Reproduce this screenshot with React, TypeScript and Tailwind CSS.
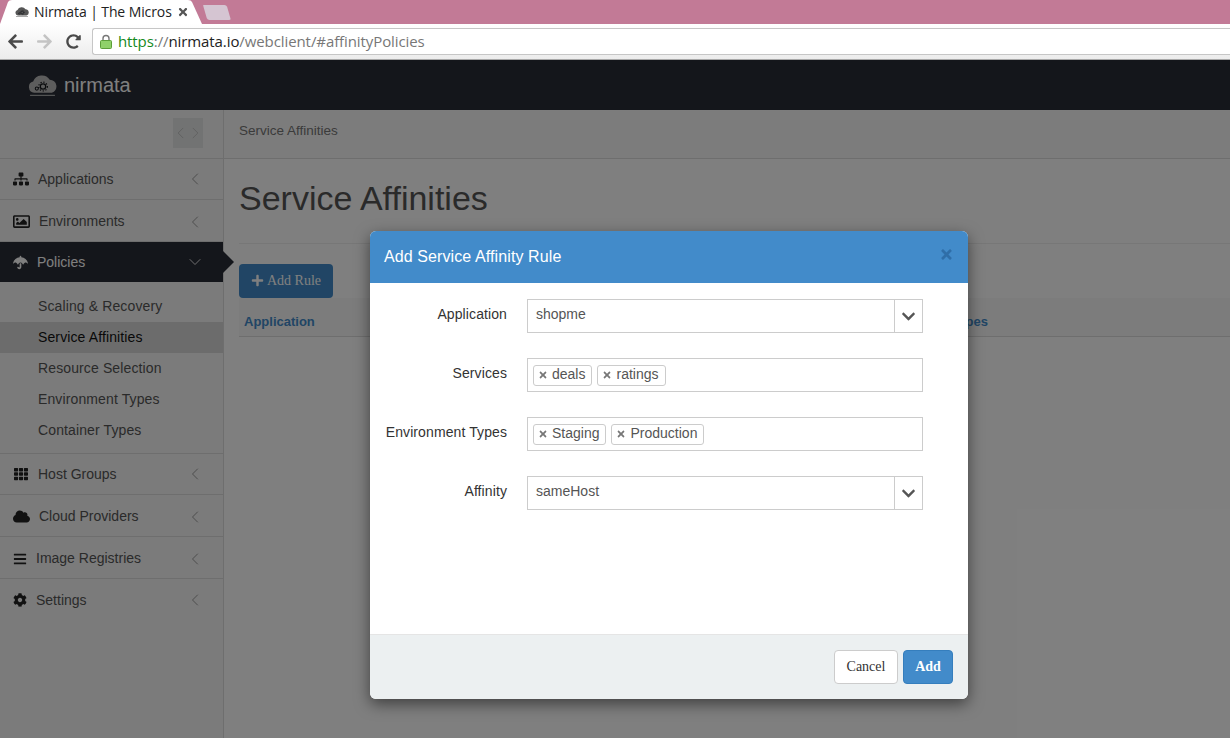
import { ChevronDown, ChevronLeft, ChevronRight } from 'lucide-react';
import {
  FaArrowLeft,
  FaArrowRight,
  FaBars,
  FaChevronDown,
  FaCloud,
  FaCog,
  FaPlus,
  FaRedoAlt,
  FaRegImage,
  FaSitemap,
  FaTh,
  FaTimes,
  FaUmbrella,
} from 'react-icons/fa';

const SUB_ITEMS = ['Scaling & Recovery', 'Service Affinities', 'Resource Selection', 'Environment Types', 'Container Types'];

function CloudLogo({ className }: { className: string }) {
  return (
    <svg viewBox="1 1 28 22" className={className}>
      <path d="M7 19a5.5 5.5 0 0 1-1-10.8A9 9 0 0 1 22 6.5a6.4 6.4 0 0 1 2 12.5z" fill="currentColor" />
      <circle cx="15.5" cy="13" r="2.6" fill="none" stroke="#14161b" strokeWidth="1.2" />
      <circle cx="15.5" cy="13" r="4.2" fill="none" stroke="#14161b" strokeWidth="1.2" strokeDasharray="1.2 1.6" />
      <circle cx="9.5" cy="15" r="1.5" fill="none" stroke="#14161b" strokeWidth="1" />
      <rect x="3" y="21" width="24" height="1" fill="currentColor" />
    </svg>
  );
}

function BrowserChrome() {
  return (
    <div className="h-[60px] shrink-0 flex flex-col font-['Open_Sans',sans-serif]">
      {/* Tab strip */}
      <div className="h-[24px] bg-[#c27a96] flex items-end overflow-hidden">
        <div className="relative h-[24px] w-[202px] shrink-0 flex items-center pl-[15px] text-[14px] text-[#222]">
          <svg viewBox="0 0 202 24" className="absolute inset-0 w-full h-full">
            <path d="M0 24 L8 2 Q9 0 12 0 H188 Q191 0 192 2 L202 24 Z" fill="#fff" />
          </svg>
          <CloudLogo className="relative w-[14px] h-[12px] text-[#555] mr-[5px] shrink-0" />
          <span className="relative w-[136px] shrink-0 whitespace-nowrap leading-none tracking-[-0.1px]">Nirmata | The Micros</span>
          <FaTimes className="relative ml-[7px] w-[12px] h-[12px] text-[#555]" />
        </div>
        <svg viewBox="0 0 32 17" className="w-[31px] h-[15px] mb-[4px] -ml-[1px]">
          <path d="M1 0 H25 Q27 0 28 2 L32 16 Q32 17 30 17 H8 Q6 17 5 15 L1 1 Z" fill="#d5c5d2" />
        </svg>
      </div>
      {/* Address bar */}
      <div className="h-[36px] bg-[linear-gradient(#fff,#ececec)] border-b border-[#a8a8a8] flex items-center">
        <div className="w-[92px] pl-[7px] flex items-center gap-[12px] shrink-0">
          <FaArrowLeft className="w-[17px] h-[17px] text-[#4a4a4a]" />
          <FaArrowRight className="w-[17px] h-[17px] text-[#c4c4c4]" />
          <FaRedoAlt className="ml-px w-[15px] h-[15px] text-[#4a4a4a]" />
        </div>
        <div className="flex-1 h-[27px] bg-white border border-[#c6c6c6] rounded-l-[3px] border-r-0 flex items-center pl-[7px] text-[15px] tracking-[-0.09px] whitespace-nowrap">
          <svg viewBox="0 0 12 15" className="w-[12px] h-[15px] mr-[6px] shrink-0">
            <path d="M3 7V4.5a3 3 0 0 1 6 0V7" fill="none" stroke="#777" strokeWidth="1.4" />
            <rect x="0.5" y="6.5" width="11" height="8" rx="1" fill="#8fd16a" stroke="#5c9e3a" />
          </svg>
          <span className="text-[#14891c]">https</span>
          <span className="text-[#777]">://</span>
          <span className="text-[#222]">nirmata.io</span>
          <span className="text-[#777]">/webclient/#affinityPolicies</span>
        </div>
      </div>
    </div>
  );
}

function NavRow({ icon, label, short, last }: { icon: React.ReactNode; label: string; short?: boolean; last?: boolean }) {
  const rowClass = last ? 'h-[42px]' : short ? 'h-[41px] border-b border-[#ddd]' : 'h-[42px] pt-[2px] border-b border-[#ddd]';
  return (
    <div className={`flex items-center pl-[13px] pr-[18px] text-[14px] text-[#555] ${rowClass}`}>
      <span className="flex items-center gap-[9px]">
        {icon}
        <span>{label}</span>
      </span>
      <ChevronLeft className="ml-auto w-[20px] h-[20px] text-[#888]" strokeWidth={1} />
    </div>
  );
}

function Sidebar() {
  return (
    <aside className="w-[224px] shrink-0 bg-[#f6f6f6] border-r border-[#ddd]">
      <div className="h-[49px] border-b border-[#ddd] flex justify-end pt-[8px] pr-[20px]">
        <div className="w-[30px] h-[30px] bg-[#e4e6e6] flex items-center justify-center text-[#bbb]">
          <ChevronLeft className="w-[20px] h-[20px] -mx-[2px]" strokeWidth={1} />
          <ChevronRight className="w-[20px] h-[20px] -mx-[2px]" strokeWidth={1} />
        </div>
      </div>
      <NavRow icon={<FaSitemap className="w-[16px] h-[14px] text-[#222]" />} label="Applications" short />
      <NavRow icon={<FaRegImage className="w-[17px] h-[17px] text-[#222]" />} label="Environments" />
      {/* Active group */}
      <div className="relative h-[40px] bg-[#292c36] flex items-center pl-[13px] pr-[18px] text-[14px] text-white">
        <span className="flex items-center gap-[9px]">
          <FaUmbrella className="w-[15px] h-[15px] text-white" />
          <span>Policies</span>
        </span>
        <ChevronDown className="ml-auto w-[20px] h-[20px] text-white" strokeWidth={1} />
        <span className="absolute left-full top-[9px] border-y-[11px] border-l-[11px] border-y-transparent border-l-[#292c36]" />
      </div>
      <div className="h-[172px] border-b border-[#ddd] pt-[9px] text-[14px] tracking-[0.12px]">
        {SUB_ITEMS.map((item) => (
          <div
            key={item}
            className={`h-[31px] pl-[38px] flex items-center ${item === 'Service Affinities' ? 'bg-[#d9d9d9] text-[#111]' : 'text-[#555]'}`}
          >
            {item}
          </div>
        ))}
      </div>
      <NavRow icon={<FaTh className="w-[16px] h-[14px] text-[#222]" />} label="Host Groups" short />
      <NavRow icon={<FaCloud className="w-[17px] h-[15px] text-[#222]" />} label="Cloud Providers" />
      <NavRow icon={<FaBars className="w-[14px] h-[14px] text-[#222]" />} label="Image Registries" />
      <NavRow icon={<FaCog className="w-[14px] h-[14px] text-[#222]" />} label="Settings" last />
    </aside>
  );
}

function PageBody() {
  return (
    <main className="flex-1 min-w-0 bg-white">
      <div className="h-[49px] bg-[#f9f9f9] border-b border-[#ddd] pl-[15px] pb-[5px] flex items-center text-[13.5px] text-[#777]">
        Service Affinities
      </div>
      <div className="pl-[15px]">
        <h1 className="h-[85px] border-b border-[#eee] pt-[19px] text-[34px] leading-[40px] text-[#555] whitespace-nowrap">
          Service Affinities
        </h1>
        <button className="mt-[20px] w-[94px] h-[34px] pb-[2px] rounded-[4px] bg-[#428bca] text-white flex items-center justify-center gap-[3px] font-['Liberation_Serif',serif] text-[14px]">
          <FaPlus className="w-[13px] h-[13px]" />
          Add Rule
        </button>
        <div className="h-[39px] border-b border-[#ddd] bg-[#f9f9f9] flex items-end justify-between pl-[5px] pr-[242px] pb-[5px] text-[13px] font-bold text-[#428bca]">
          <span>Application</span>
          <span>Environment Types</span>
        </div>
      </div>
    </main>
  );
}

function Tag({ label }: { label: string }) {
  return (
    <span className="h-[21px] border border-[#ccc] rounded-[3px] flex items-center pl-[4px] pr-[6px] pb-[2px] gap-[4px] text-[14px] text-[#555] bg-white">
      <FaTimes className="mt-[2px] w-[10px] h-[10px] text-[#777]" />
      {label}
    </span>
  );
}

function Field({ label, children }: { label: string; children: React.ReactNode }) {
  return (
    <div className="flex">
      <label className="w-[137px] text-right text-[14px] tracking-[0.1px] text-[#333] pt-[5px] whitespace-nowrap">{label}</label>
      <div className="ml-[20px] w-[396px] h-[34px] border border-[#ccc] bg-white flex items-center text-[14px] text-[#555]">
        {children}
      </div>
    </div>
  );
}

function SelectValue({ value }: { value: string }) {
  return (
    <>
      <span className="flex-1 pl-[8px] pb-[4px]">{value}</span>
      <span className="w-[28px] h-full border-l border-[#ccc] flex items-center justify-center">
        <FaChevronDown className="w-[15px] h-[15px] text-[#555]" />
      </span>
    </>
  );
}

function Modal() {
  return (
    <div className="absolute left-[370px] top-[231px] w-[598px] h-[468px] rounded-[6px] overflow-hidden bg-white flex flex-col shadow-[0_5px_15px_rgba(0,0,0,0.5)]">
      <div className="h-[52px] bg-[#428bca] flex items-center justify-between pl-[14px] pr-[14px]">
        <h4 className="text-[16px] text-white tracking-[0.1px]">Add Service Affinity Rule</h4>
        <FaTimes className="-mt-[5px] w-[15px] h-[15px] text-[#2f6ea8]" />
      </div>
      <div className="flex-1 pt-[16px] flex flex-col gap-[25px]">
        <Field label="Application">
          <SelectValue value="shopme" />
        </Field>
        <Field label="Services">
          <div className="flex items-center gap-[5px] pl-[5px]">
            <Tag label="deals" />
            <Tag label="ratings" />
          </div>
        </Field>
        <Field label="Environment Types">
          <div className="flex items-center gap-[5px] pl-[5px]">
            <Tag label="Staging" />
            <Tag label="Production" />
          </div>
        </Field>
        <Field label="Affinity">
          <SelectValue value="sameHost" />
        </Field>
      </div>
      <div className="h-[65px] bg-[#ecf0f1] border-t border-[#e5e5e5] flex items-center justify-end gap-[5px] pr-[15px] font-['Liberation_Serif',serif] text-[14px]">
        <button className="w-[64px] h-[34px] pb-[2px] rounded-[4px] bg-white border border-[#ccc] text-[#333]">Cancel</button>
        <button className="w-[50px] h-[34px] pb-[2px] rounded-[4px] bg-[#428bca] border border-[#357ebd] text-white font-bold">Add</button>
      </div>
    </div>
  );
}

export default function App() {
  return (
    <div className="relative h-[738px] w-[1230px] overflow-hidden flex flex-col font-['Liberation_Sans',sans-serif]">
      <BrowserChrome />
      {/* App header */}
      <div className="h-[50px] shrink-0 bg-[#292c36] flex items-center pl-[28px] text-white">
        <CloudLogo className="w-[29px] h-[23px] text-[#bbb] mr-[7px]" />
        <span className="text-[20px] font-['Liberation_Sans',sans-serif]">nirmata</span>
      </div>
      <div className="flex-1 flex min-h-0">
        <Sidebar />
        <PageBody />
      </div>
      {/* Backdrop */}
      <div className="absolute left-0 right-0 top-[60px] bottom-0 bg-black/50" />
      <Modal />
    </div>
  );
}
